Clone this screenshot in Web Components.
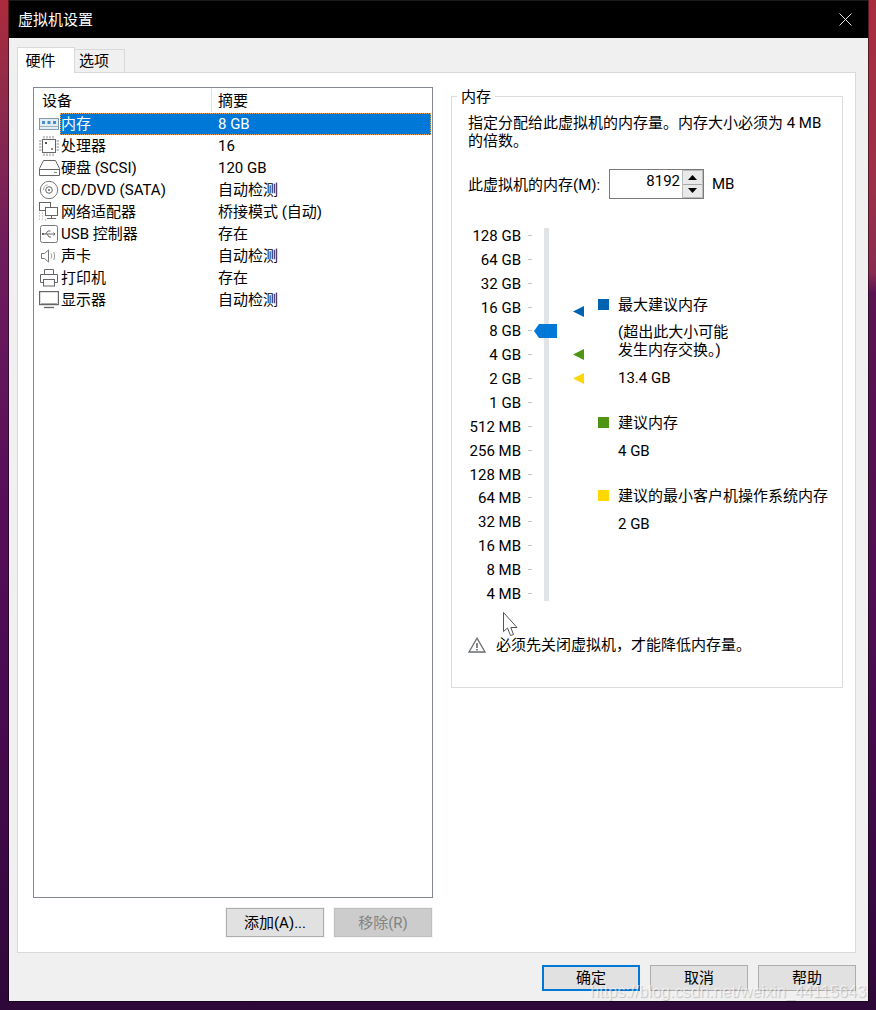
<!DOCTYPE html>
<html><head><meta charset="utf-8">
<style>html,body{margin:0;padding:0;background:#2e0a38}body{font:15px/20px Roboto,"Noto Sans CJK SC",sans-serif;color:#000}</style>
</head><body>
<vm-desktop></vm-desktop>
<script>
function def(name,html,init){customElements.define(name,class extends HTMLElement{connectedCallback(){if(this.shadowRoot)return;this.attachShadow({mode:'open'}).innerHTML=typeof html==='function'?html(this):html;if(init)init(this)}});}
const icons={
mem:`<svg width="20" height="12" viewBox="0 0 20 12"><rect x=".5" y=".5" width="19" height="11" fill="#e3edf6" stroke="#8398ab"/><rect x="3" y="3" width="3" height="3" fill="#4a8cc8"/><rect x="8.500" y="3" width="3" height="3" fill="#4a8cc8"/><rect x="14" y="3" width="3" height="3" fill="#4a8cc8"/><path d="M1 8.500h18" stroke="#9fb0bf"/></svg>`,
cpu:`<svg width="20" height="20" viewBox="0 0 20 20" fill="none"><rect x="3.500" y="3.500" width="13" height="13" stroke="#666"/><path d="M5 0v2.500M8 0v2.500M11 0v2.500M14 0v2.500M5 17.500V20M8 17.500V20M11 17.500V20M14 17.500V20M0 5h2.500M0 8h2.500M0 11h2.500M0 14h2.500M17.500 5H20M17.500 8H20M17.500 11H20M17.500 14H20" stroke="#8a8a8a"/><rect x="6" y="6" width="2" height="2" fill="#555"/><rect x="12" y="12" width="2" height="2" fill="#888"/></svg>`,
disk:`<svg width="21" height="16" viewBox="0 0 21 16" fill="none"><path d="M4.500.5h12l4 8v7H.5v-7z" stroke="#666"/><path d="M1 9.500h19" stroke="#666"/><path d="M15 12.500h3" stroke="#888"/></svg>`,
cd:`<svg width="20" height="20" viewBox="0 0 20 20" fill="none"><circle cx="10" cy="10" r="8.700" stroke="#777"/><circle cx="10" cy="10" r="3.300" stroke="#666"/><circle cx="10" cy="10" r="1" fill="#666"/><path d="M4.500 10a5.500 5.500 0 0 1 4-5.300" stroke="#aaa"/></svg>`,
net:`<svg width="22" height="20" viewBox="0 0 22 20" fill="none"><rect x="1.500" y=".5" width="11" height="8" stroke="#666"/><rect x="7.500" y="5.500" width="12" height="8" fill="#fff" stroke="#666"/><path d="M13.500 14v2M9 16.500h9" stroke="#666"/><path d="M1 11h1M4 11h1M1 14h1M4 14h1M1 17h1M4 17h1M7 18h1" stroke="#999"/></svg>`,
usb:`<svg width="20" height="20" viewBox="0 0 20 20" fill="none"><rect x="1.500" y="1.500" width="17" height="17" rx="2" stroke="#777"/><path d="M4 10h11M6.500 10l2.500-3h2.500M8 10l2 3h2" stroke="#666"/><path d="M14.500 8.500L16 10l-1.500 1.500" stroke="#666"/><rect x="3" y="9" width="2" height="2" fill="#666"/></svg>`,
snd:`<svg width="20" height="18" viewBox="0 0 20 18" fill="none"><path d="M2.500 6.500h3l4-3.500v12l-4-3.500h-3z" stroke="#777"/><path d="M12 6.500c1 1.500 1 3.500 0 5M14.500 5c1.500 2.500 1.500 5.500 0 8" stroke="#999"/></svg>`,
prn:`<svg width="20" height="18" viewBox="0 0 20 18" fill="none"><path d="M5.500 5.500v-5h9v5" stroke="#666"/><path d="M4.500 13.500h-3v-8h17v8h-3" stroke="#666"/><rect x="4.500" y="10.500" width="11" height="6.500" stroke="#666"/></svg>`,
mon:`<svg width="22" height="18" viewBox="0 0 22 18" fill="none"><rect x="1.600" y=".6" width="18.800" height="13" stroke="#666" stroke-width="1.200"/><path d="M6 16.500h10" stroke="#666" stroke-width="1.300"/><path d="M3 12.500h16" stroke="#aaa"/></svg>`};
const rows=[['mem','内存','8 GB'],['cpu','处理器','16'],['disk','硬盘 (SCSI)','120 GB'],['cd','CD/DVD (SATA)','自动检测'],['net','网络适配器','桥接模式 (自动)'],['usb','USB 控制器','存在'],['snd','声卡','自动检测'],['prn','打印机','存在'],['mon','显示器','自动检测']];

def('vm-button',`<style>:host{display:inline-flex;box-sizing:border-box;width:98px;height:29px;align-items:center;justify-content:center;background:#e1e1e1;border:1px solid #adadad;outline:1px solid #f4f4f4;font-size:15px}
:host([foot]){height:26px;outline:none}
:host([primary]){border:2px solid #0078d7;outline:none}:host([disabled]){background:#cccccc;border-color:#bfbfbf;color:#838383}</style><slot></slot>`);

def('vm-titlebar',`<style>:host{display:flex;height:37px;background:#000;color:#fff;align-items:center;justify-content:space-between;padding:0 16px 0 9px;font-size:15px;box-sizing:border-box}svg{display:block}</style><span><slot></slot></span><svg width="13" height="13" viewBox="0 0 13 13"><path d="M.5.5l12 12M12.500.5l-12 12" stroke="#e8e8e8" fill="none"/></svg>`);

def('vm-tabs',`<style>:host{display:flex;align-items:flex-start;height:25px;padding-left:8px;position:relative;z-index:1;box-sizing:border-box}
.t{box-sizing:border-box;display:flex;align-items:center;justify-content:center;font-size:15px;padding-right:11px}
.a{width:58px;height:26px;background:#fff;border:1px solid #d9d9d9;border-bottom:none}
.i{width:51px;height:23px;margin-top:2px;background:#f0f0f0;border:1px solid #d9d9d9;border-bottom:none;margin-left:-1px}</style>
<div class="t a">硬件</div><div class="t i">选项</div>`);

def('device-row',h=>{const k=h.getAttribute('icon');return `<style>:host{display:grid;grid-template-columns:27px 157px 1fr;height:22px;align-items:center;font-size:15px}
.ic{display:flex;justify-content:center;align-items:center;height:22px;padding-left:3px;box-sizing:border-box}.n,.s{height:22px;line-height:23px;white-space:nowrap}
svg{display:block;flex:none}</style><div class="ic">${icons[k]}</div><div class="n">${h.getAttribute('name')}</div><div class="s">${h.getAttribute('sum')}</div>`});

def('device-list',`<style>:host{display:flex;flex-direction:column;box-sizing:border-box;width:400px;height:811px;border:1px solid #828790;background:#fff}
.h{display:grid;grid-template-columns:177px 1fr;height:25px;align-items:start;font-size:15px;flex:none}
.h div{height:24px;line-height:27px;padding-left:8px}.h div+div{border-left:1px solid #e5e5e5;padding-left:6px}
.sel{position:absolute;left:26px;top:0;width:371px;height:22px;background:#0078d7;box-sizing:border-box;border:1px dotted #e8a05a}
.l{position:relative}#r{position:relative}</style>
<div class="h"><div>设备</div><div>摘要</div></div><div class="l"><div class="sel"></div><div id="r"></div></div>`,h=>{
 const r=h.shadowRoot.getElementById('r');
 rows.forEach((x,i)=>{const e=document.createElement('device-row');e.setAttribute('icon',x[0]);e.setAttribute('name',x[1]);e.setAttribute('sum',x[2]);if(!i)e.style.color='#fff';r.appendChild(e)});
});

const scale=['128 GB','64 GB','32 GB','16 GB','8 GB','4 GB','2 GB','1 GB','512 MB','256 MB','128 MB','64 MB','32 MB','16 MB','8 MB','4 MB'];
def('mem-slider',`<style>:host{display:block;width:130px;height:373px;position:relative}
.lab{display:flex;flex-direction:column;justify-content:space-between;height:373px}
.lab div{height:15px;line-height:17px;display:grid;grid-template-columns:54px 12px;font-size:15px;text-align:right;white-space:nowrap}
.lab i{display:block;width:4px;height:1px;background:#c4c4c4;margin:7px 0 0 7px}
.track{position:absolute;left:77px;top:0;width:5px;height:373px;background:#e1e4e6}
svg{position:absolute;display:block}
</style><div class="lab" id="l"></div><div class="track"></div>
<svg style="left:67px;top:96px" width="23" height="14" viewBox="0 0 23 14"><path d="M0 7L5 0H23V14H5Z" fill="#0078d7"/></svg>
<svg style="left:106px;top:78px" width="11" height="11" viewBox="0 0 11 11"><path d="M0 5.500L11 0V11Z" fill="#0063b1"/></svg>
<svg style="left:106px;top:121px" width="11" height="11" viewBox="0 0 11 11"><path d="M0 5.500L11 0V11Z" fill="#4f9412"/></svg>
<svg style="left:106px;top:145px" width="11" height="11" viewBox="0 0 11 11"><path d="M0 5.500L11 0V11Z" fill="#fcd800"/></svg>`,h=>{
 const l=h.shadowRoot.getElementById('l');scale.forEach(s=>{const d=document.createElement('div');d.innerHTML=`<span>${s}</span><i></i>`;l.appendChild(d)});
});

def('mem-legend',`<style>:host{display:flex;flex-direction:column;font-size:15px;line-height:20px;min-width:0}
.k{display:flex;align-items:center;gap:9px;height:20px;white-space:nowrap}.b{width:11px;height:11px;flex:none;margin-top:-1px}.v{padding-left:20px}</style>
<div class="k" style="margin-top:67px"><span class="b" style="background:#0063b1"></span><span>最大建议内存</span></div>
<div class="v" style="margin-top:8px;line-height:18px">(超出此大小可能<br>发生内存交换。)</div>
<div class="v" style="margin-top:9px">13.4 GB</div>
<div class="k" style="margin-top:25px"><span class="b" style="background:#4f9412"></span><span>建议内存</span></div>
<div class="v" style="margin-top:8px">4 GB</div>
<div class="k" style="margin-top:25px"><span class="b" style="background:#ffd800"></span><span>建议的最小客户机操作系统内存</span></div>
<div class="v" style="margin-top:8px">2 GB</div>`);

def('mem-panel',`<style>:host{display:block;box-sizing:border-box;width:392px;height:592px;border:1px solid #dcdcdc;position:relative;padding:17px 15px 0 16px;font-size:15px;line-height:18px}
.leg{position:absolute;left:5px;top:-10px;background:#fff;padding:0 4px;line-height:20px}
.d{height:36px;width:360px}
.inp{display:flex;align-items:center;margin-top:19px;height:30px}
.lb{width:141px;flex:none;white-space:nowrap;padding-top:2px}
.box{box-sizing:border-box;width:95px;height:30px;border:1px solid #7a7a7a;display:flex;background:#fff}
.num{flex:1;text-align:right;padding-right:2px;line-height:23px}
.sp{width:21px;display:flex;flex-direction:column;background:#e9e9e9;border:1px solid #bcbcbc;box-sizing:border-box}
.sp div{flex:1;display:flex;align-items:center;justify-content:center}.sp div+div{border-top:1px solid #a8a8a8}
.mb{margin-left:8px}
.g{display:grid;grid-template-columns:131px 1fr;margin-top:29px;margin-left:-1px;height:374px}
.warn{display:flex;align-items:center;gap:10px;margin-top:33px;height:20px}
svg{display:block}
.cur{position:absolute;left:51px;top:515px}</style>
<div class="leg">内存</div>
<div class="d">指定分配给此虚拟机的内存量。内存大小必须为 4 MB 的倍数。</div>
<div class="inp"><span class="lb">此虚拟机的内存(M):</span><div class="box"><div class="num">8192</div><div class="sp"><div><svg width="9" height="5"><path d="M0 5L4.500 0L9 5Z"/></svg></div><div><svg width="9" height="5"><path d="M0 0L4.500 5L9 0Z"/></svg></div></div></div><span class="mb">MB</span></div>
<div class="g"><mem-slider></mem-slider><mem-legend></mem-legend></div>
<div class="warn"><svg width="18" height="16" viewBox="0 0 18 16" fill="none"><path d="M9 1.200L17 15H1Z" stroke="#6b6f72" stroke-width="1.300"/><path d="M9 6v5M9 12v1.500" stroke="#555" stroke-width="1.400"/></svg><span>必须先关闭虚拟机，才能降低内存量。</span></div>
<svg class="cur" width="16" height="25" viewBox="0 0 16 25"><path d="M.5.5V19.500L4.500 16 7.500 23.500 10.500 22.500 7.800 15.500H14Z" fill="#fff" stroke="#555"/></svg>`);

def('vm-panel',`<style>:host{display:grid;grid-template-columns:400px 392px;column-gap:18px;box-sizing:border-box;width:839px;height:881px;background:#fff;border:1px solid #d9d9d9;padding:14px 12px 0 15px;margin-left:8px}
.left{display:flex;flex-direction:column}.b{display:flex;justify-content:flex-end;gap:10px;margin-top:10px;padding-right:1px}.r{margin-top:9px;height:592px}</style>
<div class="left"><device-list></device-list><div class="b"><vm-button>添加(A)...</vm-button><vm-button disabled>移除(R)</vm-button></div></div><div class="r"><mem-panel></mem-panel></div>`);

def('vm-window',`<style>:host{display:flex;flex-direction:column;box-sizing:border-box;width:859px;height:1001px;background:#f0f0f0;border-top:1px solid #1a1a1a;box-shadow:0 0 0 1px rgba(0,0,0,.45)}
.body{flex:1;padding-top:9px}.foot{display:flex;justify-content:flex-end;gap:10px;padding:12px 12px 0 0}</style>
<vm-titlebar>虚拟机设置</vm-titlebar><div class="body"><vm-tabs></vm-tabs><vm-panel></vm-panel><div class="foot"><vm-button foot primary>确定</vm-button><vm-button foot>取消</vm-button><vm-button foot>帮助</vm-button></div></div>`);

def('vm-desktop',`<style>:host{display:block;box-sizing:border-box;width:876px;height:1010px;padding:0 0 0 9px;position:relative;overflow:hidden;background:linear-gradient(180deg,#ac2b3c 0,#8e2a4c 10%,#6e1c5c 25%,#560e58 50%,#440a4c 75%,#2e0838 100%) left/50% 100% no-repeat,linear-gradient(180deg,#a92c3e 0,#9c3048 18%,#8a2c50 27%,#5a1450 29%,#4e0e50 60%,#3a0a44 85%,#2e0838 100%) right/50% 100% no-repeat}
.wm{position:absolute;right:10px;top:981px;font:16.300px/20px "Liberation Sans",sans-serif;color:rgba(255,255,255,.6);text-shadow:1px 1px 1px rgba(0,0,0,.2);white-space:nowrap}</style>
<vm-window></vm-window><div class="wm">https://blog.csdn.net/weixin_44115643</div>`);
</script></body></html>
